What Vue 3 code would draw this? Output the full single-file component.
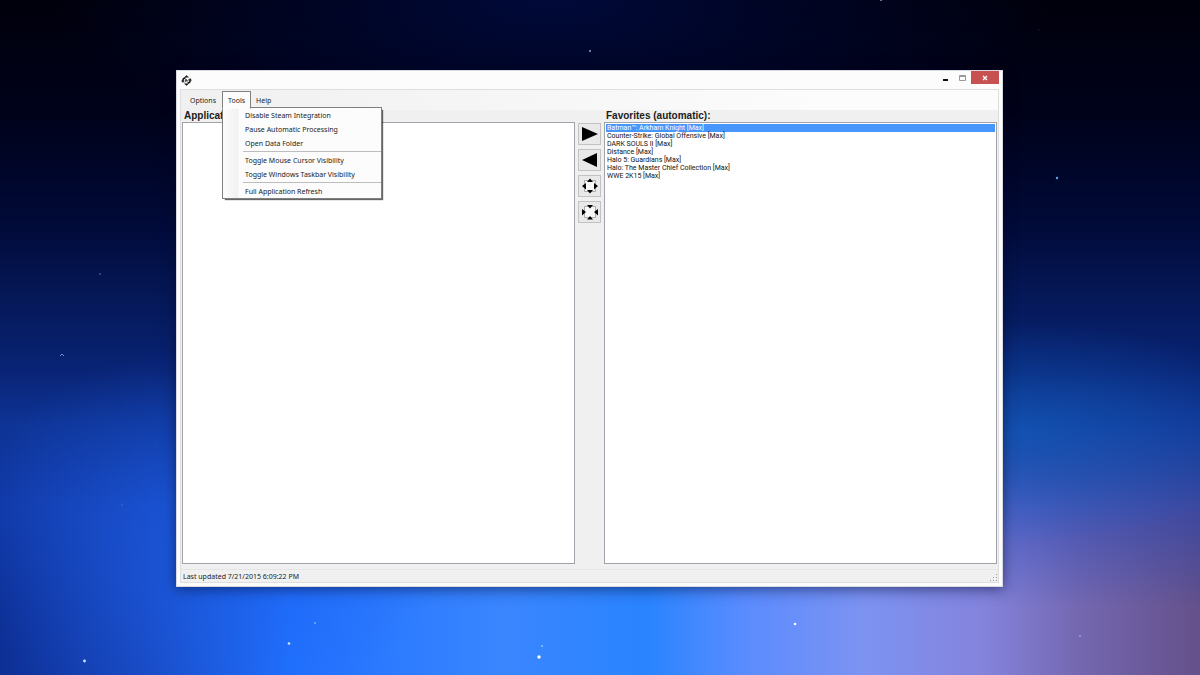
<script setup>
import { ref } from 'vue'

const selected = ref(['Batman™: Arkham Knight [Max]'])
const applications = ref([])
const favorites = [
  'Batman™: Arkham Knight [Max]',
  'Counter-Strike: Global Offensive [Max]',
  'DARK SOULS II [Max]',
  'Distance [Max]',
  'Halo 5: Guardians [Max]',
  'Halo: The Master Chief Collection [Max]',
  'WWE 2K15 [Max]',
]
const toolGroups = [
  ['Disable Steam Integration', 'Pause Automatic Processing', 'Open Data Folder'],
  ['Toggle Mouse Cursor Visibility', 'Toggle Windows Taskbar Visibility'],
  ['Full Application Refresh'],
]
</script>

<template>
  <div class="desktop">
    <svg class="stars" viewBox="0 0 1200 675" preserveAspectRatio="none" aria-hidden="true">
      <g fill="#c9e4ff">
        <circle cx="590" cy="51" r="1" opacity=".7" />
        <circle cx="881" cy="0" r="1" opacity=".7" />
        <circle cx="1057" cy="178" r="1.2" fill="#5aa4f0" />
        <circle cx="100" cy="274" r=".8" opacity=".5" />
        <path d="M60 356l2-2 2 2" fill="none" stroke="#7fb0f0" stroke-width=".8" />
        <circle cx="122" cy="505" r=".7" opacity=".3" />
        <circle cx="315" cy="623" r=".9" opacity=".6" />
        <circle cx="289" cy="643.500" r="1.3" />
        <circle cx="84.500" cy="661" r="1.400" />
        <circle cx="542" cy="646" r=".9" opacity=".7" />
        <circle cx="539" cy="657" r="1.700" fill="#fff" />
        <circle cx="795" cy="624" r="1.300" fill="#fff" />
        <circle cx="1080" cy="636" r=".9" opacity=".5" />
        <circle cx="1039" cy="30" r=".6" opacity=".2" />
      </g>
    </svg>

    <main class="window">
      <header class="titlebar">
        <svg class="app-icon" viewBox="0 0 22 22" aria-hidden="true">
          <path d="M6 5l5-4.500L16 5zM6 17l5 4.500 5-4.500z" fill="#111" />
          <path d="M4 12Q3 6 9 6M18 10q1 6-5 6" fill="none" stroke="#111" stroke-width="3" />
          <path d="M0 11h7l-3 5zM22 11h-7l3-5z" fill="#222" />
          <path d="M8 15l2-7 2 5 3-4" fill="none" stroke="#444" stroke-width="2" />
        </svg>
        <div class="caption">
          <button class="cap" aria-label="Minimize"><svg viewBox="0 0 16 12"><path d="M5 7h5v2H5z" fill="#111" /></svg></button>
          <button class="cap" aria-label="Maximize"><svg viewBox="0 0 16 12"><path d="M4.500 3.500h6v5h-6zM4.500 4.500h6" fill="none" stroke="#999" /></svg></button>
          <button class="cap close" aria-label="Close"><svg viewBox="0 0 16 12"><path d="M6 4l4 4M10 4l-4 4" fill="none" stroke="#fff" stroke-width="1.300" /></svg></button>
        </div>
      </header>

      <div class="client">
        <nav class="menubar">
          <button class="menu">Options</button>
          <div class="menu-wrap">
            <button class="menu open" aria-expanded="true">Tools</button>
            <div class="dropdown" role="menu">
              <div v-for="(group, i) in toolGroups" :key="i" class="group">
                <button v-for="item in group" :key="item" class="item" role="menuitem">{{ item }}</button>
              </div>
            </div>
          </div>
          <button class="menu">Help</button>
        </nav>

        <div class="panes">
          <section class="pane">
            <label for="apps">Applications:</label>
            <select id="apps" v-model="applications" class="list" multiple></select>
          </section>

          <div class="actions">
            <button class="act" aria-label="Add to favorites"><svg viewBox="0 0 20 20"><path d="M2 3l16 7-16 7z" fill="#000" /></svg></button>
            <button class="act" aria-label="Remove from favorites"><svg viewBox="0 0 20 20"><path d="M17 3L2 10l15 7z" fill="#000" /></svg></button>
            <button class="act" aria-label="Make borderless">
              <svg viewBox="0 0 20 20">
                <path d="M4.500 4.500h11v11h-11z" fill="#f8f8f8" stroke="#aaa" />
                <path d="M7 6l3-3.500L13 6zM7 14l3 3.500 3-3.500zM6 7l-4 3 4 3.500zM14 7l4 3-4 3.500z" fill="#000" />
              </svg>
            </button>
            <button class="act" aria-label="Restore borders">
              <svg viewBox="0 0 20 20">
                <path d="M4.500 4.500h11v11h-11z" fill="#f8f8f8" stroke="#aaa" />
                <path d="M7 3h6l-3 3.500zM7 17.500h6L10 14zM2 7l4 3-4 3.500zM18 7l-4 3 4 3.500z" fill="#000" />
              </svg>
            </button>
          </div>

          <section class="pane">
            <label for="favs">Favorites (automatic):</label>
            <select id="favs" v-model="selected" class="list" multiple>
              <option v-for="name in favorites" :key="name" :value="name">{{ name }}</option>
            </select>
          </section>
        </div>

        <footer class="status">
          <span>Last updated 7/21/2015 6:09:22 PM</span>
          <svg class="grip" viewBox="0 0 8 8" aria-hidden="true">
            <path d="M6 0h1v1H6zM3 3h1v1H3zM6 3h1v1H6zM0 6h1v1H0zM3 6h1v1H3zM6 6h1v1H6z" fill="#999" />
          </svg>
        </footer>
      </div>
    </main>
  </div>
</template>

<style>
body {
  margin: 0;
}
</style>

<style scoped>
* {
  box-sizing: border-box;
}

.desktop {
  position: relative;
  display: flex;
  min-height: 100vh;
  padding: 70px 197px 88px 176px;
  font-family: "Noto Sans", "Open Sans", sans-serif;
  font-size: 7px;
  color: #1b1b1b;
  background:
    radial-gradient(ellipse 500px 170px at 46% 0%, rgba(0, 10, 62, 0.9), rgba(0, 6, 50, 0) 100%),
    radial-gradient(ellipse 240px 190px at 17% 80%, rgba(30, 96, 235, 0.55), rgba(20, 70, 200, 0) 100%),
    radial-gradient(ellipse 260px 110px at 85% 64%, rgba(16, 96, 190, 0.6), rgba(16, 90, 180, 0) 100%),
    linear-gradient(#00000c, #00021a 17%, #010a38 33%, #05195a 45%, rgba(9, 36, 118, 1) 55%, rgba(14, 52, 150, 0.95) 63%, rgba(20, 64, 180, 0.5) 75%, rgba(20, 64, 180, 0) 90%),
    linear-gradient(90deg, #0d2f95, #1848c0 12%, #2070ff 24%, #3a86ff 42%, #2a84ff 54%, #5a8cff 62%, #7d93f2 72%, #8483dc 82%, #7467b0 90%, #64508a);
}

.stars {
  position: absolute;
  inset: 0;
  width: 100%;
  height: 100%;
}

button {
  margin: 0;
  padding: 0;
  border: 0;
  background: none;
  color: inherit;
  font: inherit;
}

.window {
  position: relative;
  display: flex;
  flex: 1;
  flex-direction: column;
  padding: 0 3px 3px;
  border: 1px solid #d9d9e2;
  background: #fcfcfc;
  box-shadow: 0 2px 12px rgba(0, 0, 30, 0.5);
}

.titlebar {
  display: flex;
  align-items: flex-start;
  justify-content: space-between;
  height: 18px;
}

.app-icon {
  width: 11px;
  height: 11px;
  margin: 4px 0 0 1px;
}

.caption {
  display: flex;
}

.cap {
  display: grid;
  width: 17px;
  height: 13px;
  place-items: center;
}

.cap svg {
  width: 16px;
  height: 12px;
}

.close {
  width: 28px;
  background: #c75050;
}

.client {
  display: flex;
  flex: 1;
  flex-direction: column;
  border: 1px solid #dedede;
  background: #f0f0f0;
}

.menubar {
  display: flex;
  height: 20px;
  padding: 1px 4px 0;
  background: linear-gradient(90deg, #f0f0f0, #fcfcfc 80%);
}

.menu {
  height: 18px;
  padding: 0 4px;
  border: 1px solid transparent;
}

.menu-wrap {
  position: relative;
  margin-left: 1px;
}

.open {
  position: relative;
  z-index: 3;
  padding: 0 5px;
  border-color: #808080;
  border-bottom-color: #fcfcfc;
  background: #fcfcfc;
}

.dropdown {
  position: absolute;
  top: 16px;
  left: 0;
  z-index: 2;
  width: 160px;
  border: 1px solid #808080;
  background: linear-gradient(90deg, #fcfcfc, #f1f1f1 15px, #fcfcfc 16px);
  box-shadow: 2px 2px 1px -1px rgba(0, 0, 0, 0.6);
}

.item {
  display: block;
  width: 100%;
  height: 14px;
  padding: 0 0 0 22px;
  text-align: left;
}

.group + .group::before {
  display: block;
  height: 1px;
  margin: 1px 0 1px 20px;
  background: #bdbdbd;
  content: "";
}

.panes {
  display: flex;
  flex: 1;
  padding: 0 1px;
}

.pane {
  display: flex;
  flex: 1;
  flex-direction: column;
  min-width: 0;
}

.pane label {
  height: 12px;
  padding-left: 2px;
  font: bold 10px/12px "Liberation Sans", Arial, sans-serif;
}

.list {
  flex: 1;
  width: 100%;
  min-height: 0;
  padding: 1px;
  overflow: hidden;
  border: 1px solid #a0a4aa;
  border-radius: 0;
  outline: 0;
  background: #fff;
  color: #111;
  font: 7px/8px Roboto, Tahoma, sans-serif;
}

.list option {
  height: 8px;
  min-height: 8px;
  padding: 0 1px;
  line-height: 8px;
}

.list option:checked {
  background: linear-gradient(#4796fb, #4796fb);
  color: #fff;
}

.actions {
  display: flex;
  flex-direction: column;
  gap: 4px;
  padding: 13px 3px 0;
}

.act {
  display: grid;
  width: 23px;
  height: 22px;
  border: 1px solid #c2c2c2;
  background: #e9e9e9;
  place-items: center;
}

.act svg {
  width: 20px;
  height: 20px;
}

.status {
  display: flex;
  align-items: center;
  justify-content: space-between;
  height: 13px;
  margin-top: 5px;
  padding: 0 0 0 2px;
  border-top: 1px solid #e5e5e5;
}

.grip {
  align-self: flex-end;
  width: 8px;
  height: 8px;
}
</style>
